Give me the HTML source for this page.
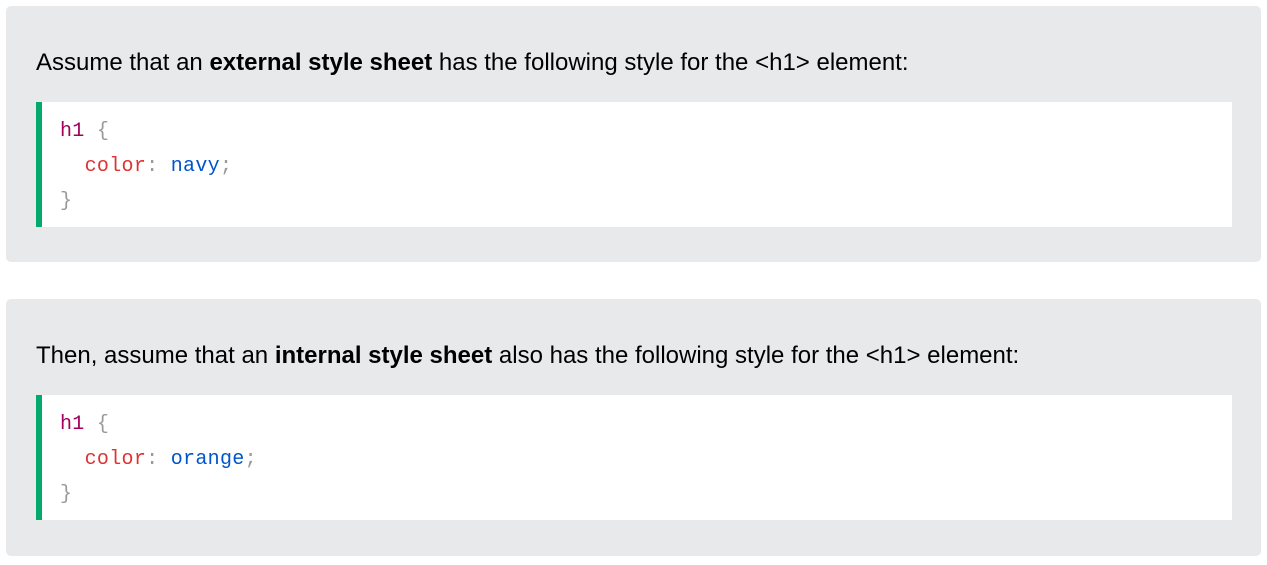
<!DOCTYPE html>
<html><head><meta charset="utf-8"><style>
html,body{margin:0;padding:0;background:#fff;width:1267px;height:565px;overflow:hidden}
.panel{position:absolute;left:6px;width:1255px;height:256px;background:#E7E9EB;border-radius:5px}
.p{position:absolute;left:30px;top:43px;font:24px "Liberation Sans",sans-serif;color:#000;white-space:nowrap}
.code{position:absolute;left:30px;top:96px;width:1196px;height:125px;background:#fff;border-left:6px solid #04AA6D;font:20px/35px "Liberation Mono",monospace;letter-spacing:0.3px;padding-top:12px;box-sizing:border-box}
.code div{padding-left:18px;white-space:pre}
.s{color:#a2005a}.b{color:#999}.pr{color:#d33}.v{color:#0055cc}
</style></head><body>
<div class="panel" style="top:6px">
<div class="p">Assume that an <b>external style sheet</b> has the following style for the &lt;h1&gt; element:</div>
<div class="code"><div><span class="s">h1</span> <span class="b">{</span></div><div>  <span class="pr">color</span><span class="b">:</span> <span class="v">navy</span><span class="b">;</span></div><div><span class="b">}</span></div></div>
</div>
<div class="panel" style="top:299px;height:257px">
<div class="p">Then, assume that an <b>internal style sheet</b> also has the following style for the &lt;h1&gt; element:</div>
<div class="code"><div><span class="s">h1</span> <span class="b">{</span></div><div>  <span class="pr">color</span><span class="b">:</span> <span class="v">orange</span><span class="b">;</span></div><div><span class="b">}</span></div></div>
</div>
</body></html>
